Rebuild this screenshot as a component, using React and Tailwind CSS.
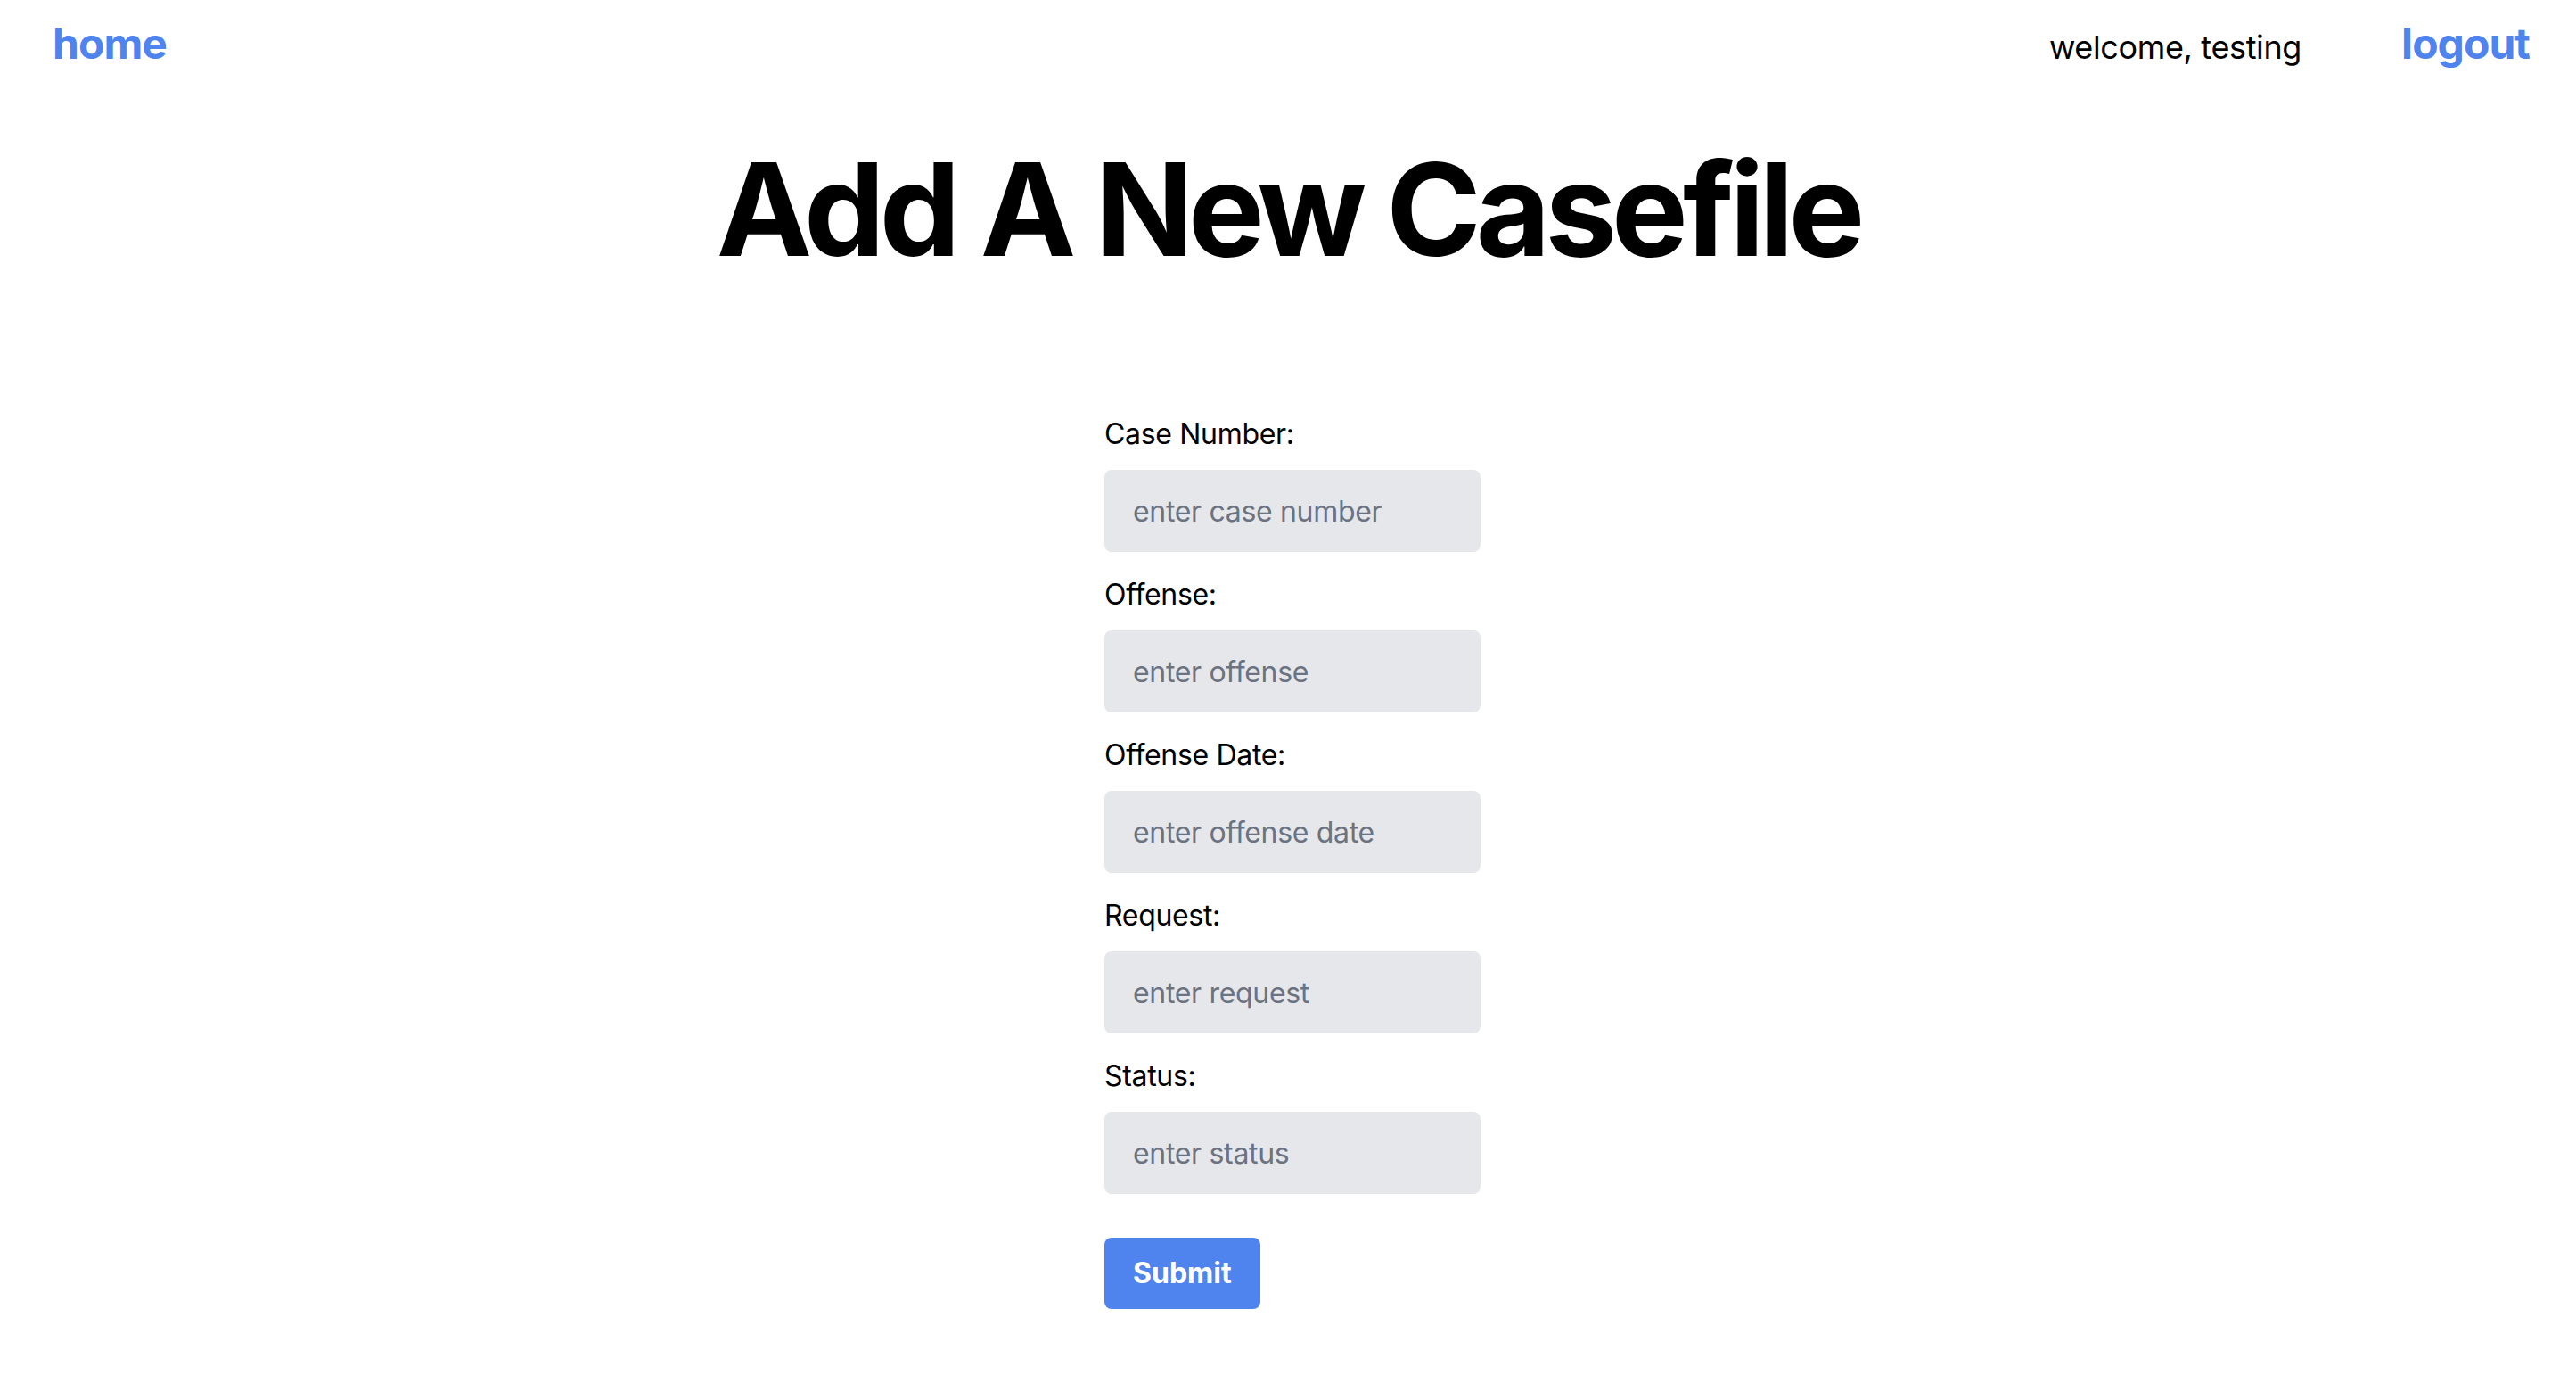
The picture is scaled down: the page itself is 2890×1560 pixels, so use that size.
export default function App() {
  const fields = [
    { label: "Case Number:", ph: "enter case number" },
    { label: "Offense:", ph: "enter offense" },
    { label: "Offense Date:", ph: "enter offense date" },
    { label: "Request:", ph: "enter request" },
    { label: "Status:", ph: "enter status" },
  ];
  return (
    <div
      className="min-h-screen bg-white text-black"
      style={{ fontFamily: "Inter, 'Noto Sans', sans-serif" }}
    >
      <header className="flex items-baseline justify-between pl-[59px] pr-[52px] pt-[17px]">
        <a className="text-[48px] leading-[64px] font-bold tracking-[-0.02em] text-[#4f83ee]">home</a>
        <div className="flex items-baseline gap-[112px]">
          <span className="text-[36px] leading-[56px] tracking-[-0.01em]">welcome, testing</span>
          <a className="text-[48px] leading-[64px] font-bold tracking-[-0.02em] text-[#4f83ee]">logout</a>
        </div>
      </header>
      <h1 className="mt-[82px] text-center text-[144px] leading-none font-bold tracking-[-6px]">
        Add A New Casefile
      </h1>
      <div className="mt-[156px] flex justify-center">
        <form className="flex w-[432px] flex-col pl-[10px]">
          {fields.map((f) => (
            <div key={f.label} className="mb-[24px] flex flex-col gap-[16px]">
              <label className="text-[32px] leading-[48px] tracking-[-0.01em]">{f.label}</label>
              <input
                placeholder={f.ph}
                className="h-[92px] w-[422px] rounded-[8px] bg-[#e5e7eb] px-[32px] text-[32px] leading-[48px] tracking-[-0.01em] placeholder:text-[#6b7280] outline-none"
              />
            </div>
          ))}
          <div className="mt-[25px]">
            <button
              type="button"
              className="rounded-[8px] bg-[#4f83ee] px-[32px] py-[16px] text-[32px] leading-[48px] font-bold text-white"
            >
              Submit
            </button>
          </div>
        </form>
      </div>
    </div>
  );
}
